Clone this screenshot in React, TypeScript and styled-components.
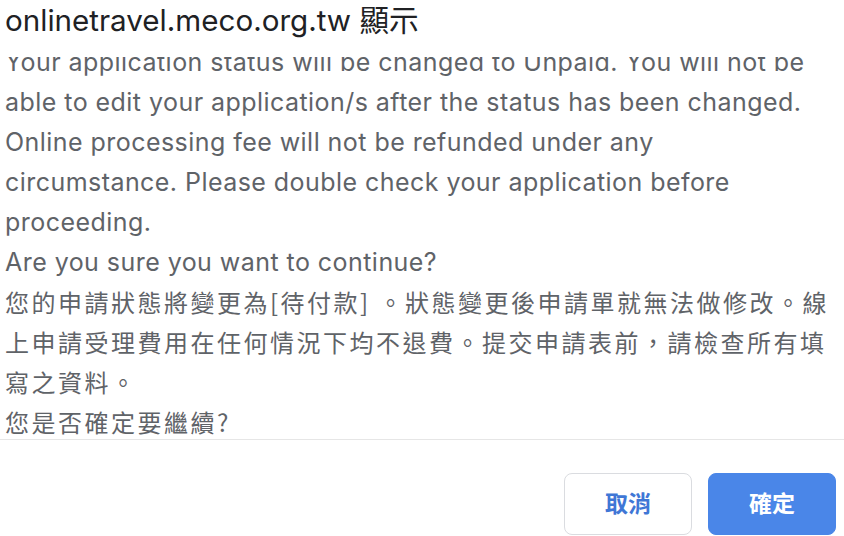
import React from "react";
import styled, { createGlobalStyle } from "styled-components";

const Global = createGlobalStyle`
  html, body { margin: 0; padding: 0; background: #ffffff; }
  body { width: 844px; height: 536px; overflow: hidden; }
`;

const Dialog = styled.div`
  width: 844px;
  height: 536px;
  display: flex;
  flex-direction: column;
  background: #ffffff;
  font-family: Inter, "Noto Sans CJK TC", sans-serif;
  overflow: hidden;
`;

const Title = styled.div`
  height: 57px;
  padding: 0 0 0 5px;
  font-size: 29.6px;
  line-height: 37px;
  color: #202124;
  flex: none;
  white-space: nowrap;
`;

const Cjk = styled.span`
  font-family: "Noto Sans CJK TC", sans-serif;
`;

const Scroller = styled.div`
  height: 382px;
  overflow: hidden;
  flex: none;
  border-bottom: 1px solid #e6e6e6;
`;

const Message = styled.div`
  margin-top: -15px;
  padding-left: 5px;
  color: #5f6368;
  line-height: 40px;
`;

const Line = styled.div<{ $cjk?: boolean }>`
  white-space: nowrap;
  font-family: ${(p) =>
    p.$cjk ? '"Noto Sans CJK TC", sans-serif' : 'Inter, sans-serif'};
  font-size: ${(p) => (p.$cjk ? "24px" : "25px")};
  letter-spacing: ${(p) => (p.$cjk ? "2.5px" : "0.45px")};
`;

const Footer = styled.div`
  flex: 1;
  display: flex;
  justify-content: flex-end;
  align-items: flex-start;
  gap: 16px;
  padding: 33px 8px 0 0;
`;

const Button = styled.button<{ $primary?: boolean }>`
  width: 128px;
  height: 62px;
  border-radius: 8px;
  border: 1px solid ${(p) => (p.$primary ? "#4a86e8" : "#dadce0")};
  background: ${(p) => (p.$primary ? "#4a86e8" : "#ffffff")};
  color: ${(p) => (p.$primary ? "#ffffff" : "#3f77d6")};
  font-family: "Noto Sans CJK TC", sans-serif;
  font-weight: 700;
  font-size: 23px;
  padding: 0 0 4px 0;
`;

const lines: { text: string; cjk?: boolean }[] = [
  { text: "Your application status will be changed to Unpaid. You will not be" },
  { text: "able to edit your application/s after the status has been changed." },
  { text: "Online processing fee will not be refunded under any" },
  { text: "circumstance. Please double check your application before" },
  { text: "proceeding." },
  { text: "Are you sure you want to continue?" },
  { text: "您的申請狀態將變更為[待付款] 。狀態變更後申請單就無法做修改。線", cjk: true },
  { text: "上申請受理費用在任何情況下均不退費。提交申請表前，請檢查所有填", cjk: true },
  { text: "寫之資料。", cjk: true },
  { text: "您是否確定要繼續?", cjk: true },
];

export default function App() {
  return (
    <>
      <Global />
      <Dialog>
        <Title>
          onlinetravel.meco.org.tw <Cjk>顯示</Cjk>
        </Title>
        <Scroller>
          <Message>
            {lines.map((l, i) => (
              <Line key={i} $cjk={l.cjk}>
                {l.text}
              </Line>
            ))}
          </Message>
        </Scroller>
        <Footer>
          <Button>取消</Button>
          <Button $primary>確定</Button>
        </Footer>
      </Dialog>
    </>
  );
}
